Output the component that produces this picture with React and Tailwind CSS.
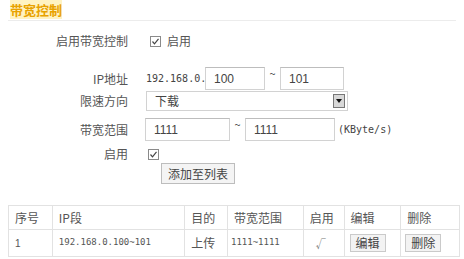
import React from 'react';

const cjk = { fontFamily: '"Noto Sans CJK SC", "Liberation Sans", sans-serif' };
const num = { fontFamily: '"Liberation Sans", "Noto Sans CJK SC", sans-serif' };
const mono = { fontFamily: '"DejaVu Sans Mono", monospace', fontSize: '9px' };

const Label = ({ children }) => (
  <div className="w-[130px] shrink-0 pr-[2px] text-right text-[12px] text-[#555]">{children}</div>
);

const Check = () => (
  <span className="inline-flex h-[11px] w-[11px] items-center justify-center border border-[#8a8a8a] bg-white">
    <svg width="9" height="9" viewBox="0 0 9 9">
      <path d="M1.5 4.5 L3.5 6.8 L7.5 1.8" fill="none" stroke="#444" strokeWidth="1.2" />
    </svg>
  </span>
);

const Input = ({ value, className }) => (
  <div
    className={`flex items-center border border-[#d2d2d2] border-t-[#bdbdbd] bg-white pl-[8px] text-[12px] text-[#444] ${className}`}
    style={num}
  >
    {value}
  </div>
);

const SmallBtn = ({ children }) => (
  <span className="inline-flex h-[18px] items-center border border-[#cacaca] bg-[#f3f3f3] px-[5px] text-[12px] text-[#444]">
    {children}
  </span>
);

export default function App() {
  const cols = ['w-[44px]', 'w-[133px]', 'w-[43px]', 'w-[76px]', 'w-[41px]', 'w-[57px]', 'w-[58px]'];
  const head = ['序号', 'IP段', '目的', '带宽范围', '启用', '编辑', '删除'];

  return (
    <div className="h-[259px] w-[464px] overflow-hidden bg-white text-[#444]" style={cjk}>
      <div className="h-[20px] pl-[10px] leading-[16px]">
        <span className="bg-[#fff3c2] text-[13px] font-bold text-[#e8a200]">带宽控制</span>
      </div>
      <div className="mx-[8px] h-px bg-[#ececec]" />

      <div className="mt-[9px] flex h-[22px] items-center">
        <Label>启用带宽控制</Label>
        <div className="ml-[20px] flex items-center gap-[6px] text-[12px] text-[#555]">
          <Check />
          <span>启用</span>
        </div>
      </div>

      <div className="mt-[15px] flex h-[23px] items-center">
        <Label>IP地址</Label>
        <span className="ml-[16px] w-[59px] text-[#444]" style={{ ...mono, fontSize: '10px' }}>
          192.168.0.
        </span>
        <Input value="100" className="h-[23px] w-[60px]" />
        <span className="w-[15px] self-start text-center text-[11px] leading-[12px]">~</span>
        <Input value="101" className="h-[23px] w-[64px]" />
      </div>

      <div className="mt-[1px] flex h-[20px] items-center">
        <Label>限速方向</Label>
        <div className="ml-[16px] flex h-[20px] w-[202px] items-center justify-between border border-[#d2d2d2] bg-white pl-[8px] pr-[2px] text-[12px]">
          <span>下载</span>
          <span className="flex h-[14px] w-[12px] items-center justify-center border border-[#777] bg-[#d8d8d8]">
            <svg width="6" height="4" viewBox="0 0 6 4">
              <path d="M0 0 H6 L3 4 Z" fill="#111" />
            </svg>
          </span>
        </div>
      </div>

      <div className="mt-[7px] flex h-[23px] items-center">
        <Label>带宽范围</Label>
        <Input value="1111" className="ml-[15px] h-[23px] w-[85px]" />
        <span className="w-[15px] self-start text-center text-[11px] leading-[12px]">~</span>
        <Input value="1111" className="h-[23px] w-[90px]" />
        <span className="ml-[3px] text-[#444]" style={{ ...mono, fontSize: '10px' }}>
          (KByte/s)
        </span>
      </div>

      <div className="mt-[5px] flex h-[16px] items-center">
        <Label>启用</Label>
        <span className="ml-[18px] flex">
          <Check />
        </span>
      </div>

      <div className="mt-[1px] flex h-[21px] pl-[161px]">
        <span className="flex w-[74px] items-center justify-center border border-[#bdbdbd] bg-[#f4f4f4] text-[12px] text-[#444]">
          添加至列表
        </span>
      </div>

      <div className="mx-[8px] mt-[21px] w-[452px] border border-[#e2e2e2] text-[12px] text-[#555]">
        <div className="flex h-[24px] border-b border-[#e2e2e2]">
          {head.map((h, i) => (
            <div
              key={h}
              className={`${cols[i]} flex items-center pl-[6px] ${i < 6 ? 'border-r border-[#e2e2e2]' : ''}`}
            >
              {h}
            </div>
          ))}
        </div>
        <div className="flex h-[26px]">
          <div className={`${cols[0]} flex items-center border-r border-[#e2e2e2] pl-[6px] text-[10px]`} style={num}>1</div>
          <div className={`${cols[1]} flex items-center border-r border-[#e2e2e2] pl-[6px]`} style={mono}>
            192.168.0.100~101
          </div>
          <div className={`${cols[2]} flex items-center border-r border-[#e2e2e2] pl-[6px]`}>上传</div>
          <div className={`${cols[3]} flex items-center border-r border-[#e2e2e2] pl-[3px]`} style={mono}>
            1111~1111
          </div>
          <div className={`${cols[4]} flex items-center border-r border-[#e2e2e2] pl-[12px] text-[10px] text-[#777]`}>√</div>
          <div className={`${cols[5]} flex items-center border-r border-[#e2e2e2] pl-[5px]`}>
            <SmallBtn>编辑</SmallBtn>
          </div>
          <div className={`${cols[6]} flex items-center pl-[4px]`}>
            <SmallBtn>删除</SmallBtn>
          </div>
        </div>
      </div>
    </div>
  );
}
